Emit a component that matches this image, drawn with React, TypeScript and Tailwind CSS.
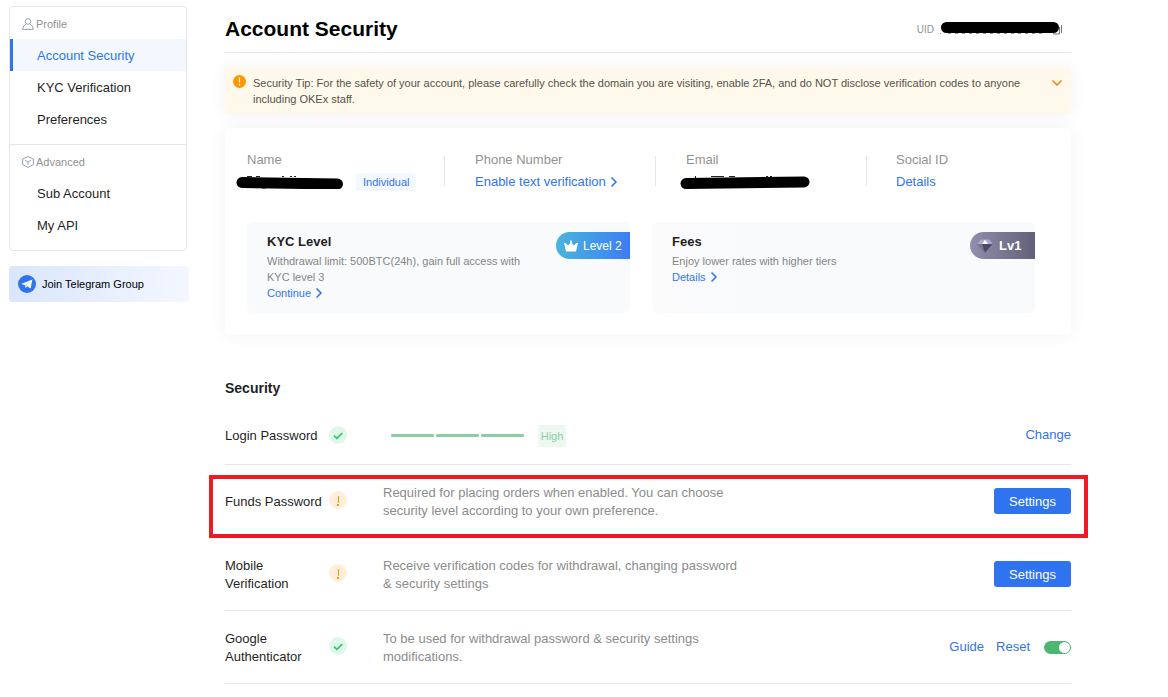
import type { ReactNode } from "react";
import { ChevronDown, ChevronRight } from "lucide-react";

const profileLinks = [
  { label: "Account Security", active: true },
  { label: "KYC Verification", active: false },
  { label: "Preferences", active: false },
];

const advancedLinks = [
  { label: "Sub Account", active: false },
  { label: "My API", active: false },
];

const UserIcon = () => (
  <svg className="w-3 h-3 shrink-0" viewBox="0 0 12 12" fill="none" stroke="#94a1b5" aria-hidden="true">
    <circle cx="6" cy="3.5" r="2.8" />
    <path d="M4 6.3 1.6 8 .6 11.4H11.4L10.4 8 8 6.3" />
  </svg>
);

const CubeIcon = () => (
  <svg className="w-3 h-3 shrink-0" viewBox="0 0 12 12" fill="none" stroke="#94a1b5" aria-hidden="true">
    <path d="M6 .6 11.4 3v5.6L6 11.4.6 8.600V3z" />
    <path d="M3 4 6 6l3-2M6 6v3" />
  </svg>
);

const TelegramIcon = () => (
  <svg className="w-[18px] h-[18px] shrink-0" viewBox="0 0 18 18" aria-hidden="true">
    <circle cx="9" cy="9" r="9" fill="#2f74ee" />
    <path d="M3.2 8.9 14.4 4.4 12.6 13.6 9.2 11.3 7.5 13 7.1 10.2z" fill="#fff" />
    <path d="M7.1 10.2 12 6.6 8.3 10.7 7.5 13z" fill="#b9d0fa" />
  </svg>
);

const CrownIcon = () => (
  <svg className="w-[14px] h-3 shrink-0" viewBox="0 0 14 12" fill="#fff" aria-hidden="true">
    <path d="M0 3h1.500l2.700 2.600L6.200 3V.6h1.600V3l2 2.600L12.500 3H14L12 11.5H2z" />
  </svg>
);

const DiamondIcon = () => (
  <svg className="w-4 h-[14px] shrink-0" viewBox="0 0 16 14" aria-hidden="true">
    <path d="M3.5.5h9L15.5 5H.5z" fill="#aaa7d2" />
    <path d="M.5 5h15L8 13.8z" fill="#4b4964" />
    <path d="M.5 5H5l3 8.8z" fill="#77749a" />
    <path d="M8 .8 11 5H5z" fill="#fff" />
  </svg>
);

const StatusIcon = ({ ok }: { ok: boolean }) =>
  ok ? (
    <svg className="w-[18px] h-[18px]" viewBox="0 0 18 18" role="img" aria-label="Enabled">
      <circle cx="9" cy="9" r="9" fill="#dff8e9" />
      <path d="M5 9.6 7.9 12.4 13.4 7" fill="none" stroke="#2bcb70" strokeWidth="1.7" />
    </svg>
  ) : (
    <svg className="w-[18px] h-[18px]" viewBox="0 0 18 18" role="img" aria-label="Not set">
      <circle cx="9" cy="9" r="9" fill="#ffefda" />
      <path d="M9.500 5v7" stroke="#ff9800" />
      <path d="M8 13h2v2H8z" fill="#ff9800" />
    </svg>
  );

const NavGroup = ({ icon, title, links }: { icon: ReactNode; title: string; links: typeof profileLinks }) => (
  <div>
    <div className="h-8 pt-px pl-3 flex items-center gap-[2px] text-[11px] text-[#929292]">
      {icon}
      <span className="pt-px">{title}</span>
    </div>
    {links.map((link) => (
      <a
        key={link.label}
        href="#"
        className={
          link.active
            ? "h-8 pt-[2px] flex items-center border-l-3 border-[#2f74ee] bg-[#f3f8ff] pl-6 text-[#2f74ee]"
            : "h-8 pt-[2px] flex items-center pl-[27px] text-[#1f1f1f]"
        }
      >
        {link.label}
      </a>
    ))}
  </div>
);

const InfoItem = ({ label, children }: { label: string; children: ReactNode }) => (
  <div className="flex flex-col gap-[2px] leading-5 whitespace-nowrap">
    <span className="text-[#929292]">{label}</span>
    <div className="h-5 flex items-center">{children}</div>
  </div>
);

const Divider = () => <span className="h-[30px] w-px bg-[#e6e6e6]" />;

const Arrow = () => <ChevronRight className="w-4 h-4" strokeWidth={2.5} />;

const SecurityRow = ({ label, ok, children }: { label: string; ok: boolean; children: ReactNode }) => (
  <li className="relative min-h-[73px] flex items-center border-b border-[#e6e6e6] leading-[18px]">
    <span className="w-[104px] shrink-0 pt-[2px]">{label}</span>
    <span className="w-[54px] shrink-0 pb-[2px]">
      <StatusIcon ok={ok} />
    </span>
    {children}
  </li>
);

const SettingsButton = () => (
  <button
    type="button"
    className="ml-auto h-[26px] w-[77px] shrink-0 pt-px rounded-[3px] bg-[#2f74ee] text-white"
  >
    Settings
  </button>
);

const App = () => {
  return (
    <div
      className={
        "flex items-start gap-9 bg-white pl-[9px] pr-[97px] text-[13px] text-[#1f1f1f] " +
        "font-['Liberation_Sans',Arial,sans-serif]"
      }
    >
      {/* Sidebar */}
      <aside className="w-[180px] shrink-0 pt-[6px]">
        <nav className="w-[178px] rounded border border-[#e6e6e6]">
          <div className="pb-[9px] border-b border-[#e6e6e6]">
            <NavGroup icon={<UserIcon />} title="Profile" links={profileLinks} />
          </div>
          <div className="pb-[9px]">
            <NavGroup icon={<CubeIcon />} title="Advanced" links={advancedLinks} />
          </div>
        </nav>
        <a
          href="#"
          className="mt-[15px] h-9 pl-[9px] flex items-center gap-[6px] rounded-[3px] bg-linear-to-r from-[#dae6fd] to-[#f3f7ff] text-[11px] text-black"
        >
          <TelegramIcon />
          Join Telegram Group
        </a>
      </aside>

      <main className="flex-1 min-w-0">
        {/* Page header */}
        <header className="h-[53px] pt-[6px] flex items-center justify-between border-b border-[#e6e6e6]">
          <h1 className="text-[21px] font-bold text-black">Account Security</h1>
          <div className="mr-[9px] flex items-center text-[10px] text-[#929292]">
            <span className="mr-[6px]">UID</span>
            <svg className="w-[122px] h-[14px]" viewBox="0 0 122 14" aria-label="Hidden user ID" role="img">
              <path d="M0 11.5h1M8 11.5H104" stroke="#929292" strokeDasharray="3 4" />
              <path d="M113.5 5v7h6V5M121.5 3v8" fill="none" stroke="#777" />
              <path d="M6.5 5.5H113.500" stroke="#000" strokeWidth="11" strokeLinecap="round" />
            </svg>
          </div>
        </header>

        {/* Security tip */}
        <section className="mt-[14px] pt-2 pb-[7px] pl-2 pr-[6px] flex items-start rounded bg-[#fff9eb] shadow-[0_0_20px_rgba(0,0,0,0.05)] text-[11px] leading-4 text-[#55524c]">
          <svg className="w-[13px] h-[13px] mr-[7px] shrink-0" viewBox="0 0 13 13" aria-hidden="true">
            <circle cx="6.5" cy="6.5" r="6.5" fill="#ff9800" />
            <path d="M6.5 2.5v5M6.5 9v1.5" stroke="#fff" strokeWidth="1.2" />
          </svg>
          <p className="flex-1 max-w-[775px]">
            Security Tip: For the safety of your account, please carefully check the domain you are visiting,
            enable 2FA, and do NOT disclose verification codes to anyone including OKEx staff.
          </p>
          <button type="button" aria-label="Expand security tip" className="ml-auto text-[#ff7d0f]">
            <ChevronDown className="w-4 h-4" strokeWidth={2.5} />
          </button>
        </section>

        {/* Account overview */}
        <section className="mt-[14px] pt-[22px] pb-[22px] pl-[22px] rounded-md bg-white shadow-[0_0_20px_rgba(0,0,0,0.05)]">
          <div className="grid grid-cols-[198fr_211fr_211fr_204fr]">
            <div className="flex items-center justify-between">
              <InfoItem label="Name">
                <svg className="-ml-3 mr-3 w-[109px] h-[14px]" viewBox="0 0 109 14" role="img" aria-label="Hidden name">
                  <path d="M12 1.500h5M21 1.500h4M47 1.500h2M55 1.500h2M59 1.500h2M27 13h4" stroke="#222" />
                  <path d="M7 7.5 102.5 9" stroke="#000" strokeWidth="11" strokeLinecap="round" />
                </svg>
                <span className="h-[18px] px-[7px] flex items-center rounded-[3px] bg-[#f3f8ff] text-[11px] text-[#2f74ee]">
                  Individual
                </span>
              </InfoItem>
              <Divider />
            </div>
            <div className="flex items-center justify-between pl-[30px]">
              <InfoItem label="Phone Number">
                <a href="#" className="flex items-center text-[#2f74ee]">
                  Enable text verification
                  <Arrow />
                </a>
              </InfoItem>
              <Divider />
            </div>
            <div className="flex items-center justify-between pl-[30px]">
              <InfoItem label="Email">
                <svg className="-ml-[6px] w-[130px] h-[14px]" viewBox="0 0 130 14" role="img" aria-label="Hidden email">
                  <path d="M15.5 1v3M31 1.500h13M49 1.500h6M86 1.500h2M90 1.500h2" stroke="#222" />
                  <path d="M6 8.5 124 7" stroke="#000" strokeWidth="11" strokeLinecap="round" />
                </svg>
              </InfoItem>
              <Divider />
            </div>
            <div className="pl-[29px]">
              <InfoItem label="Social ID">
                <a href="#" className="text-[#2f74ee]">Details</a>
              </InfoItem>
            </div>
          </div>

          <div className="mt-[30px] pr-9 grid grid-cols-2 gap-[22px]">
            <div className="pt-[10px] pb-3 pl-5 flex items-start justify-between rounded-md bg-[#f9fafc]">
              <div className="max-w-[264px] text-[11px] leading-4 text-[#858585]">
                <h2 className="mb-px text-[13px] leading-5 font-bold text-[#1f1f1f]">KYC Level</h2>
                <p>Withdrawal limit: 500BTC(24h), gain full access with KYC level 3</p>
                <a href="#" className="flex items-center text-[#2f74ee]">
                  Continue
                  <Arrow />
                </a>
              </div>
              <span className="h-[27px] w-[74px] pl-2 flex items-center gap-[5px] shrink-0 rounded-l-full bg-linear-to-r from-[#4bb4dc] to-[#3f7cf4] text-white">
                <CrownIcon />
                <span className="pt-px text-xs whitespace-nowrap">Level 2</span>
              </span>
            </div>
            <div className="pt-[10px] pb-3 pl-5 flex items-start justify-between rounded-md bg-linear-to-r from-[#fbfbfc] to-[#f9fafc] to-25%">
              <div className="text-[11px] leading-4 text-[#858585]">
                <h2 className="mb-px text-[13px] leading-5 font-bold text-[#1f1f1f]">Fees</h2>
                <p>Enjoy lower rates with higher tiers</p>
                <a href="#" className="flex items-center text-[#2f74ee]">
                  Details
                  <Arrow />
                </a>
              </div>
              <span className="h-[27px] w-[65px] pl-[7px] flex items-center gap-[6px] shrink-0 rounded-l-full bg-linear-to-r from-[#928fae] to-[#626079] text-[13px] font-bold text-white">
                <DiamondIcon />
                Lv1
              </span>
            </div>
          </div>
        </section>

        {/* Security settings */}
        <section className="mt-[43px]">
          <h2 className="mb-2 text-[14px] leading-5 font-bold">Security</h2>
          <ul>
            <li className="h-[59px] flex items-center border-b border-[#e6e6e6]">
              <span className="w-[104px] shrink-0 pt-[2px]">Login Password</span>
              <StatusIcon ok />
              <span className="ml-11 flex gap-[2px]" role="img" aria-label="Password strength: high">
                <span className="h-[3px] w-[43px] rounded-[1px] bg-[#88d0a2]" />
                <span className="h-[3px] w-[43px] rounded-[1px] bg-[#88d0a2]" />
                <span className="h-[3px] w-[43px] rounded-[1px] bg-[#88d0a2]" />
              </span>
              <span className="ml-[14px] mt-[2px] h-[22px] w-7 flex items-center justify-center bg-[#ecf8f0] text-[11px] text-[#88d0a2]">
                High
              </span>
              <a href="#" className="ml-auto text-[#2f74ee]">Change</a>
            </li>
            <SecurityRow label="Funds Password" ok={false}>
              <p className="max-w-[356px] pt-[2px] text-[#8c8c8c]">
                Required for placing orders when enabled. You can choose security level according to your own
                preference.
              </p>
              <SettingsButton />
              {/* Highlight frame */}
              <span className="absolute top-[10px] -bottom-px -left-4 -right-[17px] border-4 border-[#ed1c24] pointer-events-none" />
            </SecurityRow>
            <SecurityRow label="Mobile Verification" ok={false}>
              <p className="max-w-[356px] pt-[2px] text-[#8c8c8c]">
                Receive verification codes for withdrawal, changing password &amp; security settings
              </p>
              <SettingsButton />
            </SecurityRow>
            <SecurityRow label="Google Authenticator" ok>
              <p className="max-w-[356px] pt-[2px] text-[#8c8c8c]">
                To be used for withdrawal password &amp; security settings modifications.
              </p>
              <div className="ml-auto flex items-center gap-3 text-[#2f74ee]">
                <a href="#">Guide</a>
                <a href="#">Reset</a>
                <label className="relative ml-[2px] flex">
                  <input
                    type="checkbox"
                    role="switch"
                    defaultChecked
                    aria-label="Google Authenticator"
                    className="peer sr-only"
                  />
                  <span className="h-[13px] w-[27px] p-px flex justify-start rounded-full bg-gray-300 peer-checked:justify-end peer-checked:bg-[#4db670]">
                    <span className="h-[11px] w-[11px] rounded-full bg-white" />
                  </span>
                </label>
              </div>
            </SecurityRow>
          </ul>
        </section>
      </main>
    </div>
  );
};

export default App;
